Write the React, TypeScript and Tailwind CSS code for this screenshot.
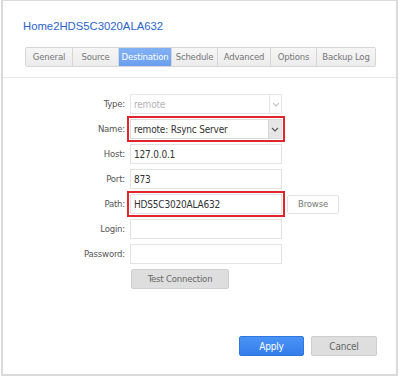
import type { ReactNode } from 'react';

const tabs = ['General', 'Source', 'Destination', 'Schedule', 'Advanced', 'Options', 'Backup Log'];
const tabWidths = ['w-[46px]', 'w-[46px]', 'w-[53px]', 'w-[46px]', 'w-[53px]', 'w-[46px]', 'w-[59px]'];

function Chevron({ className }: { className?: string }) {
  return (
    <svg width="8" height="5" viewBox="0 0 8 5" className={className}>
      <polyline points="1,1 4,4 7,1" fill="none" stroke="currentColor" strokeWidth="1.1" />
    </svg>
  );
}

function Row({ label, children }: { label: string; children: ReactNode }) {
  return (
    <div className="flex h-[20px] items-center">
      <span className="w-[123px] shrink-0 pr-[1px] text-right text-[9.5px] tracking-[-0.2px] text-[#555]">{label}</span>
      <div className="ml-[4px] flex items-center">{children}</div>
    </div>
  );
}

function TextBox({ value, marked }: { value?: string; marked?: boolean }) {
  return (
    <div
      className={
        'flex h-[20px] w-[152px] items-center border border-[#e2e2e2] bg-white px-[3px] text-[10px] tracking-[-0.2px] text-[#333] ' +
        (marked ? 'outline-2 outline-offset-[1px] outline-[#e0262b]' : '')
      }
    >
      {value}
    </div>
  );
}

export default function App() {
  return (
    <div className="h-[377px] w-[400px] bg-white font-['DejaVu_Sans_Condensed','Liberation_Sans',sans-serif]">
      <div className="ml-px flex h-[376px] w-[397px] flex-col border-2 border-t-1 border-[#dadada] bg-white">
        <div className="pl-[20px] pt-[18px] font-['Liberation_Sans',sans-serif] text-[11.3px] leading-[14px] text-[#2a63cc]">
          Home2HDS5C3020ALA632
        </div>

        <div className="ml-[22px] mt-[14px] flex h-[20px] w-fit overflow-hidden rounded-[2px] border border-[#d6d6d6]">
          {tabs.map((t, i) => (
            <div
              key={t}
              className={
                'flex items-center justify-center text-[9.5px] tracking-[-0.2px] ' +
                tabWidths[i] +
                (i > 0 ? ' border-l border-[#d6d6d6]' : '') +
                (t === 'Destination'
                  ? ' bg-gradient-to-b from-[#82b1f3] to-[#6a9ff0] text-white'
                  : ' bg-gradient-to-b from-[#f6f6f6] to-[#ececec] text-[#777]')
              }
            >
              {t}
            </div>
          ))}
        </div>

        <div className="mt-[10px] border-b border-[#e8e8e8]" />

        <div className="mt-[16px] flex flex-col gap-[5px]">
          <Row label="Type:">
            <div className="flex h-[20px] w-[152px] items-center border border-[#e6e6e6] bg-white text-[10px] tracking-[-0.2px] text-[#b5b5b5]">
              <span className="flex-1 px-[3px]">remote</span>
              <span className="flex h-full w-[12px] items-center justify-center border-l border-[#e6e6e6] text-[#c5c5c5]">
                <Chevron />
              </span>
            </div>
          </Row>
          <Row label="Name:">
            <div className="flex h-[20px] w-[152px] items-center border border-[#dcdcdc] bg-white text-[10px] tracking-[-0.2px] text-[#333] outline-2 outline-offset-[1px] outline-[#e0262b]">
              <span className="flex-1 px-[3px]">remote: Rsync Server</span>
              <span className="flex h-full w-[13px] items-center justify-center border-l border-[#d6d6d6] bg-[#e6e6e6] text-[#555]">
                <Chevron />
              </span>
            </div>
          </Row>
          <Row label="Host:">
            <TextBox value="127.0.0.1" />
          </Row>
          <Row label="Port:">
            <TextBox value="873" />
          </Row>
          <Row label="Path:">
            <TextBox value="HDS5C3020ALA632" marked />
            <button className="ml-[5px] flex h-[19px] w-[52px] items-center justify-center rounded-[2px] border border-[#e2e2e2] bg-white text-[9.5px] tracking-[-0.2px] text-[#777]">
              Browse
            </button>
          </Row>
          <Row label="Login:">
            <TextBox />
          </Row>
          <Row label="Password:">
            <TextBox />
          </Row>
          <div className="flex h-[20px]">
            <button className="ml-[128px] flex h-[20px] w-[98px] items-center justify-center rounded-[2px] border border-[#cfcfcf] bg-[#dedede] text-[9.5px] tracking-[-0.2px] text-[#666]">
              Test Connection
            </button>
          </div>
        </div>

        <div className="mr-[19px] mt-[47px] flex justify-end gap-[7px]">
          <button className="flex h-[20px] w-[65px] items-center justify-center rounded-[2px] border border-[#2f76e0] bg-gradient-to-b from-[#4a93f5] to-[#347eeb] text-[10px] tracking-[-0.2px] text-white">
            Apply
          </button>
          <button className="flex h-[20px] w-[66px] items-center justify-center rounded-[2px] border border-[#cdcdcd] bg-[#dedede] text-[10px] tracking-[-0.2px] text-[#666]">
            Cancel
          </button>
        </div>
      </div>
    </div>
  );
}
